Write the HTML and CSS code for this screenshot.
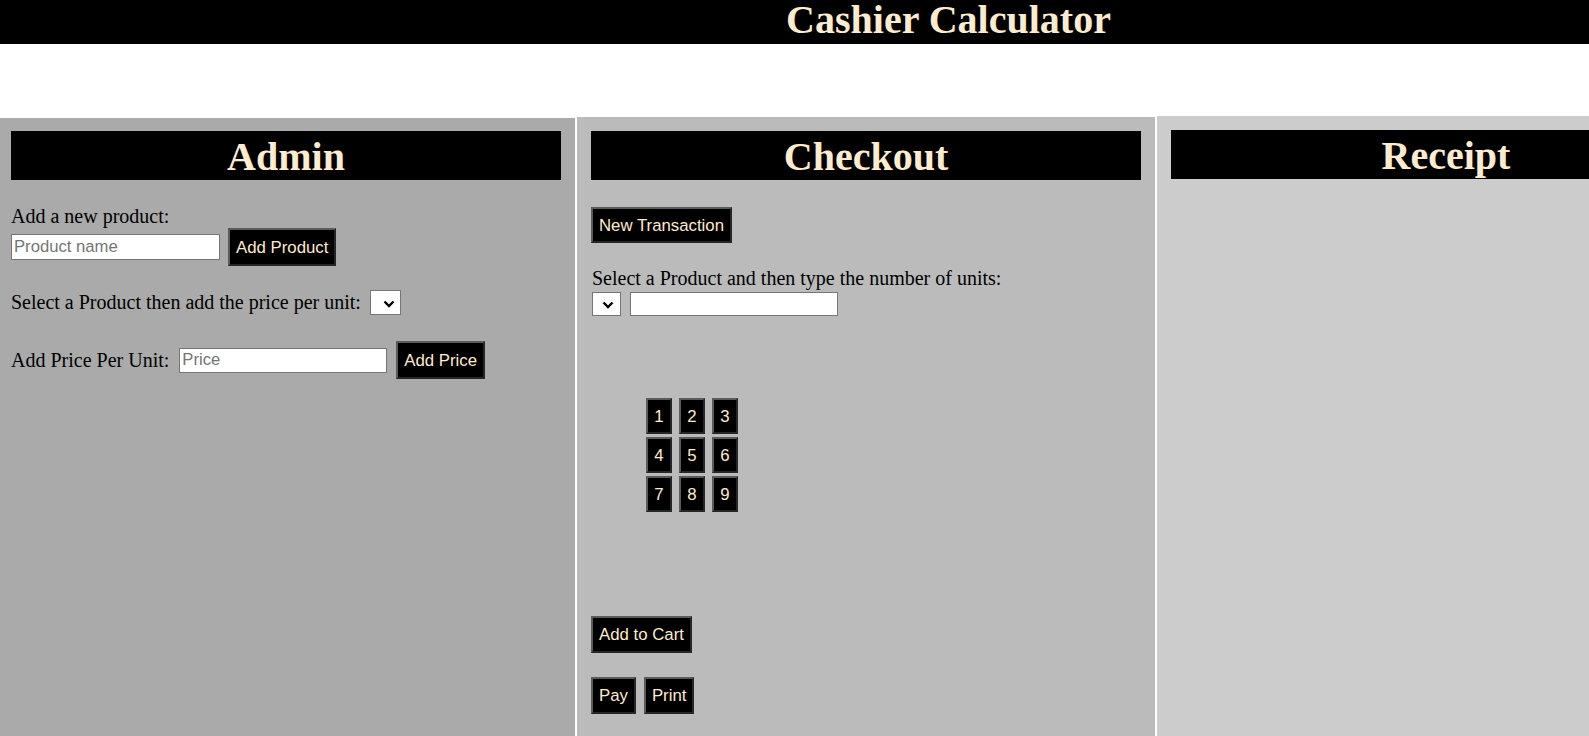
FILE: index.html
```html
<!DOCTYPE html>
<html lang="en">
<head>
<meta charset="utf-8">
<title>Cashier Calculator</title>
<link rel="stylesheet" href="styles.css">
</head>
<body>
<header class="topbar">
  <h1 class="topbar-title">Cashier Calculator</h1>
</header>
<main class="columns">
  <section class="col col-admin">
    <h2 class="col-title">Admin</h2>
    <p class="label label-first">Add a new product:</p>
    <div class="row row-product">
      <input class="text-input input-product" type="text" placeholder="Product name">
      <button class="btn btn-add-product">Add Product</button>
    </div>
    <div class="row row-select">
      <span class="label-inline">Select a Product then add the price per unit:</span>
      <select class="select select-admin"><option></option></select>
    </div>
    <div class="row row-price">
      <span class="label-inline">Add Price Per Unit:</span>
      <input class="text-input input-price" type="text" placeholder="Price">
      <button class="btn btn-add-price">Add Price</button>
    </div>
  </section>
  <section class="col col-checkout">
    <h2 class="col-title">Checkout</h2>
    <div class="row row-new">
      <button class="btn btn-new">New Transaction</button>
    </div>
    <p class="label label-units">Select a Product and then type the number of units:</p>
    <div class="row row-units">
      <select class="select select-checkout"><option></option></select>
      <input class="text-input input-units" type="text">
    </div>
    <div class="numpad">
      <button class="btn btn-key">1</button>
      <button class="btn btn-key">2</button>
      <button class="btn btn-key">3</button>
      <button class="btn btn-key">4</button>
      <button class="btn btn-key">5</button>
      <button class="btn btn-key">6</button>
      <button class="btn btn-key">7</button>
      <button class="btn btn-key">8</button>
      <button class="btn btn-key">9</button>
    </div>
    <div class="row row-cart">
      <button class="btn">Add to Cart</button>
    </div>
    <div class="row row-pay">
      <button class="btn">Pay</button>
      <button class="btn">Print</button>
    </div>
  </section>
  <section class="col col-receipt">
    <h2 class="col-title">Receipt</h2>
  </section>
</main>
</body>
</html>
```

FILE: styles.css
```css
html {
  overflow: hidden;
}

body {
  margin: 0;
  background: #ffffff;
  font-family: "Liberation Serif", "Times New Roman", serif;
  font-size: 20px;
  color: #000000;
}

.topbar {
  background: #000000;
  height: 44px;
  padding-left: 308px;
  text-align: center;
}

.topbar-title {
  margin: 0;
  font-size: 40px;
  font-weight: bold;
  line-height: 39px;
  color: #ffebcd;
}

.columns {
  display: flex;
  align-items: stretch;
  gap: 2px;
  margin-top: 72px;
  min-height: 620px;
  width: 1740px;
}

.col {
  flex: 0 0 auto;
  box-sizing: border-box;
  width: 578px;
  padding: 14px 14px 0 14px;
}

.col-admin {
  width: 575px;
  padding-left: 11px;
  padding-top: 13px;
  margin-top: 2px;
  background: #aaaaaa;
}

.col-checkout {
  margin-top: 1px;
  background: #bbbbbb;
}

.col-receipt {
  background: #cccccc;
}

.col-title {
  box-sizing: border-box;
  margin: 0;
  width: 550px;
  height: 49px;
  padding-top: 3px;
  background: #000000;
  color: #ffebcd;
  font-size: 40px;
  font-weight: bold;
  line-height: 46px;
  text-align: center;
}

.label {
  margin: 0;
  line-height: 23px;
}

.label-first {
  margin-top: 25px;
}

.row {
  display: flex;
  align-items: center;
}

.label-inline {
  line-height: 23px;
}

.text-input {
  box-sizing: border-box;
  height: 26px;
  margin: 0;
  padding: 1px 2px;
  border: 1px solid #767676;
  background: #ffffff;
  font-family: "Liberation Sans", Arial, sans-serif;
  font-size: 16.67px;
  color: #000000;
}

.text-input::placeholder {
  color: #757575;
}

.input-product {
  width: 209px;
  margin-right: 8px;
}

.row-select {
  margin-top: 24px;
}

.select {
  box-sizing: border-box;
  margin: 0;
  border: 1px solid #767676;
  border-radius: 0;
  background-color: #ffffff;
  background-image: url("data:image/svg+xml;utf8,<svg xmlns='http://www.w3.org/2000/svg' width='12' height='8' viewBox='0 0 12 8'><path d='M1.5 1.5 L6 6 L10.5 1.5' fill='none' stroke='black' stroke-width='2.4'/></svg>");
  background-repeat: no-repeat;
  background-position: center;
  background-size: 12px 8px;
  -webkit-appearance: none;
  appearance: none;
  color: transparent;
  font-family: "Liberation Sans", Arial, sans-serif;
  font-size: 16px;
}

.select-admin {
  width: 31px;
  height: 25px;
  margin-left: 9px;
  background-position: 12px 9px;
}

.row-price {
  margin-top: 26px;
}

.input-price {
  width: 208px;
  height: 25px;
  margin-left: 10px;
  margin-right: 9px;
}

.btn {
  box-sizing: border-box;
  height: 37px;
  margin: 0;
  padding: 0 6px;
  border: 2px solid;
  border-color: #5a5a5a #262626 #262626 #5a5a5a;
  background: #000000;
  color: #ffebcd;
  font-family: "Liberation Sans", Arial, sans-serif;
  font-size: 16.8px;
  line-height: 19px;
  cursor: pointer;
}

.btn-add-product,
.btn-add-price {
  height: 38px;
}

.row-new {
  margin-top: 27px;
}

.btn-new {
  height: 36px;
}

.label-units {
  margin-top: 24px;
  padding-left: 1px;
}

.row-units {
  margin-top: 2px;
  padding-left: 1px;
}

.select-checkout {
  width: 29px;
  height: 24px;
  margin-right: 9px;
  background-position: 9px 8px;
}

.input-units {
  width: 208px;
  height: 24px;
}

.numpad {
  display: grid;
  grid-template-columns: repeat(3, 26px);
  column-gap: 7px;
  row-gap: 3px;
  margin-top: 82px;
  margin-left: 55px;
  width: max-content;
}

.btn-key {
  width: 26px;
  height: 36px;
  padding: 0;
}

.row-cart {
  margin-top: 104px;
}

.row-pay {
  margin-top: 24px;
  gap: 8px;
}
```
